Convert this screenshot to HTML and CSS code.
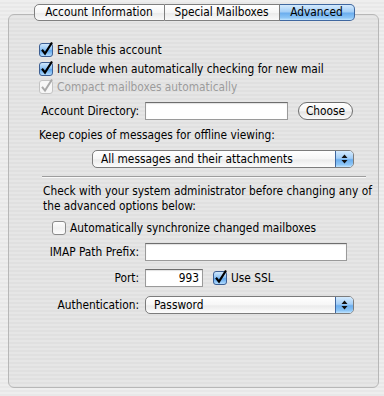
FILE: index.html
```html
<!DOCTYPE html>
<html lang="en">

<head>
  <meta charset="UTF-8">
  <title>Account Preferences - Advanced</title>
  <link rel="stylesheet" href="styles.css">
</head>

<body>
  <svg class="defs" width="0" height="0">
    <defs>
      <linearGradient id="aqua" x1="0" y1="0" x2="0" y2="1">
        <stop offset="0" stop-color="#d6ebfd" />
        <stop offset="0.45" stop-color="#8fc3f4" />
        <stop offset="0.55" stop-color="#5fa6ec" />
        <stop offset="1" stop-color="#b9e0ff" />
      </linearGradient>
      <linearGradient id="plain" x1="0" y1="0" x2="0" y2="1">
        <stop offset="0" stop-color="#ffffff" />
        <stop offset="0.5" stop-color="#f1f1f1" />
        <stop offset="1" stop-color="#fdfdfd" />
      </linearGradient>
    </defs>
  </svg>

  <div class="window">
    <div class="tabview">
      <div class="tabs">
        <span class="tab first">Account Information</span>
        <span class="tab middle">Special Mailboxes</span>
        <span class="tab last active">Advanced</span>
      </div>

      <div class="box">
        <label class="check row1">
          <svg class="cb" width="14" height="14" viewBox="0 0 14 14">
            <rect x="0.5" y="0.5" width="13" height="13" rx="2.5" fill="url(#aqua)" stroke="#3d5f93" />
            <path d="M3 6.8 L6 10.6 L13 -0.5" fill="none" stroke="#000" stroke-width="2.2" />
          </svg>
          <span>Enable this account</span>
        </label>
        <label class="check row2">
          <svg class="cb" width="14" height="14" viewBox="0 0 14 14">
            <rect x="0.5" y="0.5" width="13" height="13" rx="2.5" fill="url(#aqua)" stroke="#3d5f93" />
            <path d="M3 6.8 L6 10.6 L13 -0.5" fill="none" stroke="#000" stroke-width="2.2" />
          </svg>
          <span>Include when automatically checking for new mail</span>
        </label>
        <label class="check row3 disabled">
          <svg class="cb" width="14" height="14" viewBox="0 0 14 14">
            <rect x="0.5" y="0.5" width="13" height="13" rx="2.5" fill="#f6f6f6" stroke="#c3c3c3" />
            <path d="M3 6.8 L6 10.6 L13 -0.5" fill="none" stroke="#a8a8a8" stroke-width="2" />
          </svg>
          <span>Compact mailboxes automatically</span>
        </label>

        <div class="field-row dir-row">
          <span class="label">Account Directory:</span>
          <span class="textfield dir-field"></span>
          <span class="pill-button">Choose</span>
        </div>

        <p class="plain-text">Keep copies of messages for offline viewing:</p>

        <div class="popup offline-popup">
          <span class="popup-text">All messages and their attachments</span>
          <span class="popup-arrows">
            <svg width="7" height="10" viewBox="0 0 7 10">
              <path d="M3.5 0.5 L6.5 4 L0.5 4 Z M3.5 9.5 L6.5 6 L0.5 6 Z" fill="#111" />
            </svg>
          </span>
        </div>

        <div class="separator"></div>

        <p class="note">Check with your system administrator before changing any of the advanced options below:</p>

        <label class="check sync-row">
          <svg class="cb" width="14" height="14" viewBox="0 0 14 14">
            <rect x="0.5" y="0.5" width="13" height="13" rx="2.5" fill="url(#plain)" stroke="#8a8a8a" />
          </svg>
          <span>Automatically synchronize changed mailboxes</span>
        </label>

        <div class="field-row imap-row">
          <span class="label">IMAP Path Prefix:</span>
          <span class="textfield imap-field"></span>
        </div>

        <div class="field-row port-row">
          <span class="label">Port:</span>
          <span class="textfield port-field">993</span>
          <label class="check ssl">
            <svg class="cb" width="14" height="14" viewBox="0 0 14 14">
              <rect x="0.5" y="0.5" width="13" height="13" rx="2.5" fill="url(#aqua)" stroke="#3d5f93" />
              <path d="M3 6.8 L6 10.6 L13 -0.5" fill="none" stroke="#000" stroke-width="2.2" />
            </svg>
            <span>Use SSL</span>
          </label>
        </div>

        <div class="field-row auth-row">
          <span class="label">Authentication:</span>
          <div class="popup auth-popup">
            <span class="popup-text">Password</span>
            <span class="popup-arrows">
              <svg width="7" height="10" viewBox="0 0 7 10">
                <path d="M3.5 0.5 L6.5 4 L0.5 4 Z M3.5 9.5 L6.5 6 L0.5 6 Z" fill="#111" />
              </svg>
            </span>
          </div>
        </div>
      </div>
    </div>
  </div>
</body>

</html>
```

FILE: styles.css
```css
body {
  margin: 0;
  padding: 0;
  font-family: "DejaVu Sans Condensed", "DejaVu Sans", sans-serif;
  font-size: 11.8px;
  color: #000;
}

.defs {
  position: absolute;
}

.window {
  width: 384px;
  height: 396px;
  box-sizing: border-box;
  padding-top: 4px;
  background: repeating-linear-gradient(to bottom, #eeeeee 0 2px, #e8e8e8 2px 4px);
  overflow: hidden;
}

.tabview {
  margin: 0 5px 0 8px;
}

/* tabs */
.tabs {
  position: relative;
  z-index: 1;
  display: flex;
  justify-content: center;
  height: 17px;
}

.tab {
  box-sizing: border-box;
  height: 17px;
  line-height: 15px;
  text-align: center;
  border: 1px solid #7f7f7f;
  border-left: none;
  background: linear-gradient(to bottom, #ffffff 0%, #f6f6f6 50%, #ebebeb 55%, #fafafa 100%);
}

.tab.first {
  width: 131px;
  margin-left: 1px;
  border-left: 1px solid #7f7f7f;
  border-radius: 5px 0 0 5px;
}

.tab.middle {
  width: 115px;
}

.tab.last {
  width: 75px;
  border-radius: 0 5px 5px 0;
}

.tab.active {
  border-color: #3f679f;
  background: linear-gradient(to bottom, #d4eafd 0%, #a3cef7 45%, #6caeee 55%, #8cc5f6 85%, #c4e6ff 100%);
}

/* group box */
.box {
  box-sizing: border-box;
  height: 374px;
  margin-top: -7px;
  padding: 26px 0 0 30px;
  border: 1px solid #b7b7b7;
  border-radius: 6px;
  background: rgba(0, 0, 0, 0.03);
}

.check {
  display: flex;
  align-items: center;
  gap: 4px;
  height: 18px;
}

.check.disabled {
  color: #9c9c9c;
}

.cb {
  overflow: visible;
  flex: none;
}

.row2 {
  margin-top: 1px;
}

.plain-text {
  margin: 7px 0 0;
  line-height: 16px;
}

.field-row {
  display: grid;
  grid-template-columns: 100px auto auto;
  column-gap: 6px;
  align-items: center;
  height: 18px;
  justify-content: start;
}

.field-row .label {
  text-align: right;
  white-space: nowrap;
}

.dir-row {
  margin-top: 6px;
}

.imap-row {
  margin-top: 6px;
}

.port-row {
  margin-top: 8px;
}

.auth-row {
  margin-top: 9px;
}

.textfield {
  box-sizing: border-box;
  display: block;
  height: 18px;
  line-height: 16px;
  background: #fff;
  border: 1px solid #9a9a9a;
  border-top-color: #6e6e6e;
  box-shadow: inset 0 1px 1px rgba(0, 0, 0, 0.12);
}

.dir-field {
  width: 143px;
}

.imap-field {
  width: 202px;
}

.port-field {
  width: 58px;
  padding-right: 3px;
  text-align: right;
}

.pill-button {
  box-sizing: border-box;
  height: 18px;
  width: 55px;
  margin-left: 4px;
  line-height: 16px;
  text-align: center;
  border: 1px solid #6f6f6f;
  border-radius: 9px;
  background: linear-gradient(to bottom, #ffffff 0%, #f4f4f4 50%, #e4e4e4 55%, #fbfbfb 100%);
}

.ssl {
  margin-left: 4px;
}

/* popup menus */
.popup {
  box-sizing: border-box;
  display: flex;
  height: 18px;
  border: 1px solid #7c7c7c;
  border-radius: 5px;
  overflow: hidden;
  background: linear-gradient(to bottom, #ffffff 0%, #f6f6f6 50%, #ebebeb 55%, #fcfcfc 100%);
}

.popup-text {
  flex: 1;
  padding-left: 8px;
  line-height: 16px;
  white-space: nowrap;
}

.popup-arrows {
  display: flex;
  align-items: center;
  justify-content: center;
  width: 17px;
  border-left: 1px solid #3f679f;
  background: linear-gradient(to bottom, #d4eafd 0%, #a3cef7 45%, #6caeee 55%, #8cc5f6 85%, #c4e6ff 100%);
}

.offline-popup {
  width: 262px;
  margin: 7px 0 0 53px;
}

.auth-popup {
  width: 209px;
}

.separator {
  width: 324px;
  height: 1px;
  margin: 8px 0 0 3px;
  background: #9d9d9d;
  border-bottom: 1px solid #f8f8f8;
}

.note {
  width: 338px;
  margin: 6px 0 0 4px;
  line-height: 15px;
}

.sync-row {
  margin: 5px 0 0 13px;
}
```
